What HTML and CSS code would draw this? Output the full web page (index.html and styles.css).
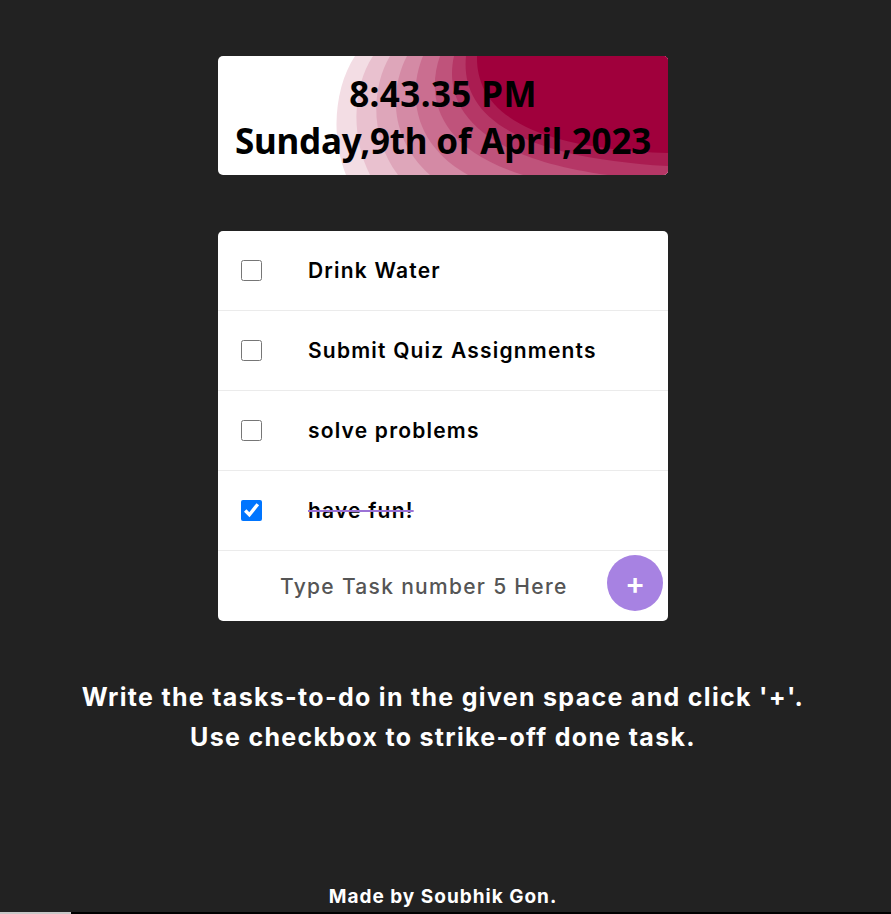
FILE: index.html
```html
<!DOCTYPE html>
<html lang="en">
<head>
<meta charset="utf-8">
<title>To-Do</title>
<link rel="stylesheet" href="styles.css">
</head>
<body>
<main class="page">
  <section class="clock">
    <svg class="clock-bg" viewBox="0 0 450 119" preserveAspectRatio="none" aria-hidden="true">
      <path fill="#f3dde4" d="M137,0 C117,30 112,80 128,119 L450,119 L450,0 Z"/>
      <path fill="#e9c1cf" d="M155,0 C135,30 132,80 152,119 L450,119 L450,0 Z"/>
      <path fill="#dea6ba" d="M172,0 C153,32 152,82 180,119 L450,119 L450,0 Z"/>
      <path fill="#d48aa5" d="M189,0 C171,34 172,84 212,119 L450,119 L450,0 Z"/>
      <path fill="#ca6e90" d="M205,0 C190,36 194,88 250,119 L450,119 L450,0 Z"/>
      <path fill="#bf537b" d="M222,0 C208,40 218,92 305,119 L450,119 L450,0 Z"/>
      <path fill="#b53766" d="M236,0 C226,45 250,100 390,119 L450,119 L450,0 Z"/>
      <path fill="#aa1c51" d="M248,0 C243,50 280,100 450,110 L450,119 L450,0 Z"/>
      <path fill="#a0003c" d="M259,0 C258,50 300,92 450,97 L450,119 L450,0 Z"/>
    </svg>
    <div class="clock-text">
      <div class="time">8:43.35 PM</div>
      <div class="date">Sunday,9th of April,2023</div>
    </div>
  </section>

  <section class="tasks">
    <label class="task"><input type="checkbox" class="check"><span class="task-text">Drink Water</span></label>
    <label class="task"><input type="checkbox" class="check"><span class="task-text">Submit Quiz Assignments</span></label>
    <label class="task"><input type="checkbox" class="check"><span class="task-text">solve problems</span></label>
    <label class="task"><input type="checkbox" class="check" checked><span class="task-text done">have fun!</span></label>
    <div class="add-row">
      <input class="add-input" type="text" placeholder="Type Task number 5 Here">
      <button class="add-btn" type="button">+</button>
    </div>
  </section>

  <p class="hint">Write the tasks-to-do in the given space and click '+'.<br>Use checkbox to strike-off done task.</p>

  <footer class="credit">Made by Soubhik Gon.</footer>
</main>
<div class="hscroll"><div class="hscroll-thumb"></div></div>
</body>
</html>
```

FILE: styles.css
```css
html, body {
  margin: 0;
  padding: 0;
  background: #222222;
  height: 100%;
  overflow: hidden;
}

.page {
  display: flex;
  flex-direction: column;
  align-items: center;
  padding-top: 56px;
  padding-right: 5px;
}

.clock {
  position: relative;
  width: 450px;
  height: 119px;
  background: #ffffff;
  border-radius: 5px;
  overflow: hidden;
}

.clock-bg {
  position: absolute;
  inset: 0;
  width: 100%;
  height: 100%;
}

.clock-text {
  position: relative;
  display: flex;
  flex-direction: column;
  align-items: center;
  padding-top: 14px;
  font-family: "Noto Sans", "Open Sans", sans-serif;
  font-weight: 700;
  font-size: 35px;
  line-height: 47px;
  color: #000;
}

.time {
  letter-spacing: 0.4px;
}

.date {
  letter-spacing: -0.2px;
}

.tasks {
  margin-top: 56px;
  width: 450px;
  background: #fff;
  border-radius: 5px;
  overflow: hidden;
  display: flex;
  flex-direction: column;
}

.task {
  display: flex;
  align-items: center;
  height: 79px;
  border-bottom: 1px solid #ebebeb;
  padding-left: 23px;
  box-sizing: content-box;
}

.check {
  width: 21px;
  height: 21px;
  margin: 0;
  flex: none;
}

.task-text {
  margin-left: 46px;
  font-family: "Inter", sans-serif;
  font-weight: 600;
  font-size: 21px;
  letter-spacing: 1.2px;
  color: #000;
}

.done {
  text-decoration: line-through;
  text-decoration-color: #9b72d6;
  text-decoration-thickness: 2px;
}

.add-row {
  display: flex;
  align-items: center;
  height: 70px;
}

.add-input {
  flex: 1;
  min-width: 0;
  border: none;
  outline: none;
  background: transparent;
  padding: 0 0 0 62px;
  margin-top: 0;
  font-family: "Inter", sans-serif;
  font-weight: 500;
  font-size: 21px;
  letter-spacing: 1.3px;
  color: #555;
}

.add-input::placeholder {
  color: #555555;
  opacity: 1;
}

.add-btn {
  width: 56px;
  height: 56px;
  margin: 0 5px 6px 0;
  border: none;
  border-radius: 50%;
  background: #a782e2;
  color: #fff;
  font-family: "Inter", sans-serif;
  font-weight: 600;
  font-size: 30px;
  line-height: 56px;
  padding: 0 0 4px 0;
  flex: none;
}

.hint {
  margin: 56px 0 0 0;
  text-align: center;
  font-family: "Inter", sans-serif;
  font-weight: 700;
  font-size: 25px;
  letter-spacing: 1.3px;
  line-height: 40px;
  color: #fff;
}

.credit {
  margin-top: 128px;
  font-family: "Inter", sans-serif;
  font-weight: 700;
  font-size: 19px;
  letter-spacing: 1px;
  color: #fff;
}

.hscroll {
  position: fixed;
  left: 0;
  right: 0;
  bottom: 0;
  height: 2px;
  background: #000;
}

.hscroll-thumb {
  width: 71px;
  height: 2px;
  background: #c8c8c8;
}
```
